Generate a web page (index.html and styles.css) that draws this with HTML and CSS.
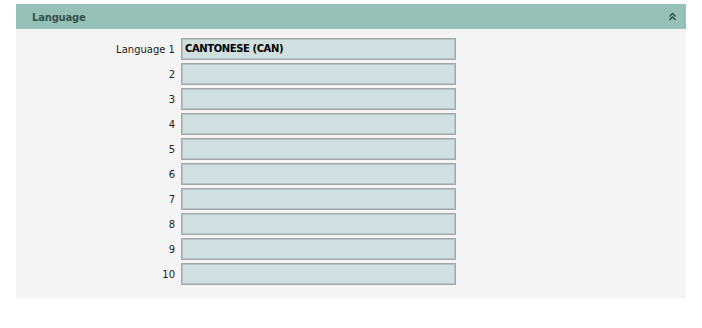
FILE: index.html
```html
<!DOCTYPE html>
<html>
<head>
<meta charset="utf-8">
<link rel="stylesheet" href="styles.css">
</head>
<body>
<div class="panel">
  <div class="panel-header">
    <span class="panel-title">Language</span>
    <svg class="collapse-icon" width="7" height="9" viewBox="0 0 7 9">
      <path d="M0.5 4.5 L3.5 1.5 L6.5 4.5 M0.5 8 L3.5 5 L6.5 8" fill="none" stroke="#2d4c47" stroke-width="1.4"/>
    </svg>
  </div>
  <div class="panel-body">
    <div class="row"><label class="label">Language 1</label><div class="field">CANTONESE (CAN)</div></div>
    <div class="row"><label class="label">2</label><div class="field"></div></div>
    <div class="row"><label class="label">3</label><div class="field"></div></div>
    <div class="row"><label class="label">4</label><div class="field"></div></div>
    <div class="row"><label class="label">5</label><div class="field"></div></div>
    <div class="row"><label class="label">6</label><div class="field"></div></div>
    <div class="row"><label class="label">7</label><div class="field"></div></div>
    <div class="row"><label class="label">8</label><div class="field"></div></div>
    <div class="row"><label class="label">9</label><div class="field"></div></div>
    <div class="row"><label class="label">10</label><div class="field"></div></div>
  </div>
</div>
</body>
</html>
```
FILE: styles.css
```css
html, body {
  margin: 0;
  padding: 0;
  background: #ffffff;
}
body {
  padding: 4px 16px 0 16px;
  font-family: "DejaVu Sans", Verdana, sans-serif;
  font-size: 10px;
  color: #1a1a1a;
}
.panel {
  width: 670px;
  background: #f4f4f4;
}
.panel-header {
  height: 25px;
  background: #97c1b6;
  display: flex;
  align-items: center;
  justify-content: space-between;
  padding: 0 10px 0 16px;
  box-sizing: border-box;
}
.panel-title {
  font-weight: bold;
  font-size: 10px;
  letter-spacing: -0.2px;
  color: #35524d;
  margin-top: 2px;
}
.collapse-icon {
  display: block;
  margin-top: 0;
}
.panel-body {
  display: flex;
  flex-direction: column;
  gap: 3px;
  padding: 9px 0 13px 0;
}
.row {
  display: flex;
  align-items: center;
  gap: 6px;
}
.label {
  width: 159px;
  text-align: right;
  color: #222222;
}
.field {
  width: 275px;
  height: 22px;
  box-sizing: border-box;
  background: #d0dfdf;
  border: 1px solid #a3a9a9;
  box-shadow: inset 0 0 0 1px #b6c3c3;
  padding: 0 3px;
  line-height: 20px;
  font-weight: bold;
  letter-spacing: -0.4px;
  color: #000000;
}
```
